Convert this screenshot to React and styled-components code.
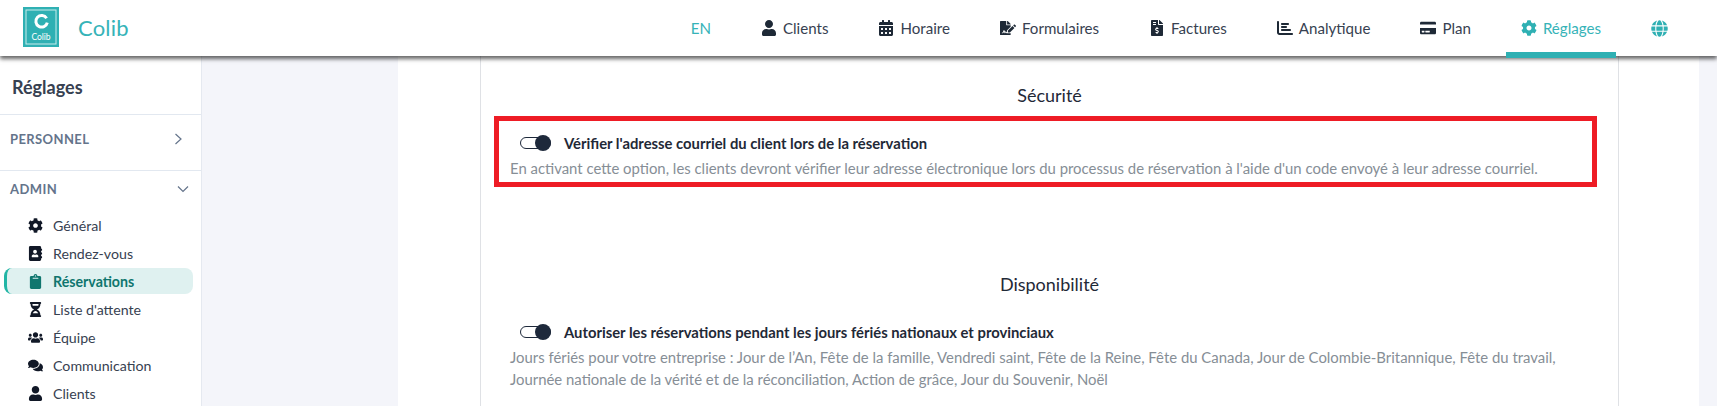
import React from 'react';
import styled, { createGlobalStyle } from 'styled-components';
import {
  FaUser, FaCalendarAlt, FaFileSignature, FaFileInvoiceDollar, FaCreditCard,
  FaCog, FaGlobe, FaAddressBook, FaClipboard, FaHourglassHalf, FaUsers, FaComments,
} from 'react-icons/fa';
import { FaChartBar } from 'react-icons/fa6';

const Global = createGlobalStyle`
  html, body { margin: 0; padding: 0; height: 406px; overflow: hidden; background: #f4f5fa; }
  body { font-family: Lato, "Open Sans", sans-serif; color: #1f2937; }
`;
const Page = styled.div`display: flex; flex-direction: column; width: 1717px; height: 406px; overflow: hidden;`;
const TopBar = styled.header`
  position: relative; z-index: 2; flex: none; height: 56px; background: #fff;
  display: flex; align-items: center; justify-content: space-between;
  padding: 0 34px 0 23px; box-shadow: 0 3px 4px rgba(0,0,0,.6);
`;
const Brand = styled.div`display: flex; align-items: center; gap: 19px;`;
const LogoBox = styled.svg`display: block; width: 36px; height: 40px; margin-top: -2px;`;
const BrandName = styled.span`font-size: 22px; color: #36b3b8; letter-spacing: .2px; margin-top: -1px;`;
const Menu = styled.nav`display: flex; align-items: stretch; gap: 20px; height: 56px;`;
const MenuItem = styled.div`
  position: relative; display: flex; align-items: center; gap: 6px; padding: 0 15px; font-size: 15.1px; height: 56px;
  color: ${p => (p.$active ? '#36b3b8' : '#374151')};
  svg { font-size: 16px; color: ${p => (p.$active ? '#2fb0b3' : '#1e2936')}; }
  &::after {
    content: ''; display: ${p => (p.$active ? 'block' : 'none')}; position: absolute; left: 0; right: 0; top: 52px; height: 6px;
    background: #2fb0b3;
  }
`;
const Lang = styled(MenuItem)`color: #36b3b8;`;
const Globe = styled(FaGlobe)`
  && { font-size: 17px; color: #2fb0b3; }
`;
const Body = styled.div`flex: 1; min-height: 0; display: flex;`;
const Sidebar = styled.aside`flex: none; width: 201px; background: #fff; border-right: 1px solid #e5e9f0;`;
const SideTitle = styled.h2`
  margin: 0; height: 59px; box-sizing: border-box; padding: 20px 0 0 12px; font-size: 18px; line-height: 22px;
  font-weight: 700; color: #374151; border-bottom: 1px solid #e2e8f0;
`;
const Group = styled.div`
  display: flex; align-items: center; justify-content: space-between; box-sizing: border-box;
  padding: ${p => (p.$open ? '0 12px 2px 10px' : '0 17px 8px 10px')}; font-size: 13px; font-weight: 700;
  letter-spacing: .4px; color: #64748b; border-bottom: ${p => (p.$open ? '0' : '1px solid #e2e8f0')};
  height: ${p => (p.$open ? '37px' : '56px')};
`;
const Chevron = styled.svg`display: block; width: 12px; height: 12px; fill: none; stroke: #64748b; stroke-width: 1.2;`;
const Items = styled.div`display: flex; flex-direction: column; padding-top: 3px;`;
const Item = styled.div`
  position: relative; display: flex; align-items: center; gap: 9px; height: 28px; margin-left: 4px; width: 189px;
  padding-left: 22px; box-sizing: border-box; font-size: 14.2px; color: ${p => (p.$active ? '#0f766e' : '#374151')};
  font-weight: ${p => (p.$active ? 700 : 400)};
  &::before {
    content: ''; display: ${p => (p.$active ? 'block' : 'none')}; position: absolute; z-index: 0; left: 0; top: 1px; bottom: 1px; right: 0;
    background: #dff1f0; border-radius: 8px; border-left: 3px solid #22b5a5;
  }
  > * { position: relative; z-index: 1; }
`;
const ItemIcon = styled.span`display: flex; justify-content: center; width: 18px; font-size: 15px; color: ${p => (p.$active ? '#0f766e' : '#111827')};`;
const Main = styled.main`flex: 1; min-width: 0; padding: 0 18px 0 196px;`;
const Card = styled.section`background: #fff; height: 100%; padding: 0 80px 0 82px; box-sizing: border-box;`;
const Inner = styled.div`height: 100%; box-sizing: border-box; border-left: 1px solid #dfe1e5; border-right: 1px solid #dfe1e5; padding-top: 26px;`;
const Heading = styled.h3`margin: 0; text-align: center; font-weight: 400; font-size: 18px; line-height: 26px; color: #1f2937;`;
const Highlight = styled.div`
  margin: 8px 21px 0 13px; height: 71px; box-sizing: border-box; border: 5px solid #ee1c25; padding: 11px 0 0 11px;
`;
const Plain = styled.div`margin: 24px 21px 0 13px; padding: 0 0 0 16px;`;
const ToggleRow = styled.div`display: flex; align-items: center; gap: 13px; height: 22px; padding-left: 10px;`;
const Toggle = styled.span`
  position: relative; display: inline-block; width: 31px; height: 12px; box-sizing: border-box; background: #fff;
  border: 1px solid #1e293b; border-radius: 8px; flex: none;
  &::after { content: ''; position: absolute; right: -1px; top: -3px; width: 16px; height: 16px; border-radius: 50%; background: #1e293b; }
`;
const Label = styled.span`font-size: 14.8px; font-weight: 700; color: #1f2937;`;
const Desc = styled.p`margin: 3px 0 0; font-size: 14.9px; line-height: 22px; color: #868e96; width: 1080px;`;
const Gap = styled.div`height: 84px;`;

const navItems = [
  [FaUser, 'Clients'], [FaCalendarAlt, 'Horaire'], [FaFileSignature, 'Formulaires'],
  [FaFileInvoiceDollar, 'Factures'], [FaChartBar, 'Analytique'], [FaCreditCard, 'Plan'],
];
const sideItems = [
  [FaCog, 'Général'], [FaAddressBook, 'Rendez-vous'], [FaClipboard, 'Réservations', true],
  [FaHourglassHalf, "Liste d'attente"], [FaUsers, 'Équipe'], [FaComments, 'Communication'], [FaUser, 'Clients'],
];

export default function App() {
  return (
    <Page>
      <Global />
      <TopBar>
        <Brand>
          <LogoBox viewBox="0 0 36 40">
            <rect width="36" height="40" fill="#2fb0b3" />
            <rect x="3" y="3" width="30" height="34" fill="none" stroke="#c9ecec" strokeWidth="1" />
            <path d="M23.6 11.2A5.8 5.8 0 1 0 24.3 15.6" fill="none" stroke="#fff" strokeWidth="3" />
            <text x="18" y="33" textAnchor="middle" fontSize="8.5" fill="#fff" fontFamily="Lato">Colib</text>
          </LogoBox>
          <BrandName>Colib</BrandName>
        </Brand>
        <Menu>
          <Lang>EN</Lang>
          {navItems.map(([Icon, name]) => (
            <MenuItem key={name}><Icon />{name}</MenuItem>
          ))}
          <MenuItem $active><FaCog />Réglages</MenuItem>
          <MenuItem><Globe /></MenuItem>
        </Menu>
      </TopBar>
      <Body>
        <Sidebar>
          <SideTitle>Réglages</SideTitle>
          <Group>
            PERSONNEL
            <Chevron viewBox="0 0 12 12"><path d="M3.5 1l5.5 5-5.5 5" /></Chevron>
          </Group>
          <Group $open>
            ADMIN
            <Chevron viewBox="0 0 12 12"><path d="M1 3.5l5 5 5-5" /></Chevron>
          </Group>
          <Items>
            {sideItems.map(([Icon, name, active]) => (
              <Item key={name} $active={active}>
                <ItemIcon $active={active}><Icon /></ItemIcon>
                <span>{name}</span>
              </Item>
            ))}
          </Items>
        </Sidebar>
        <Main>
          <Card>
            <Inner>
              <Heading>Sécurité</Heading>
              <Highlight>
                <ToggleRow>
                  <Toggle />
                  <Label>Vérifier l'adresse courriel du client lors de la réservation</Label>
                </ToggleRow>
                <Desc>En activant cette option, les clients devront vérifier leur adresse électronique lors du processus de réservation à l'aide d'un code envoyé à leur adresse courriel.</Desc>
              </Highlight>
              <Gap />
              <Heading>Disponibilité</Heading>
              <Plain>
                <ToggleRow>
                  <Toggle />
                  <Label>Autoriser les réservations pendant les jours fériés nationaux et provinciaux</Label>
                </ToggleRow>
                <Desc>Jours fériés pour votre entreprise : Jour de l’An, Fête de la famille, Vendredi saint, Fête de la Reine, Fête du Canada, Jour de Colombie-Britannique, Fête du travail, Journée nationale de la vérité et de la réconciliation, Action de grâce, Jour du Souvenir, Noël</Desc>
              </Plain>
            </Inner>
          </Card>
        </Main>
      </Body>
    </Page>
  );
}
